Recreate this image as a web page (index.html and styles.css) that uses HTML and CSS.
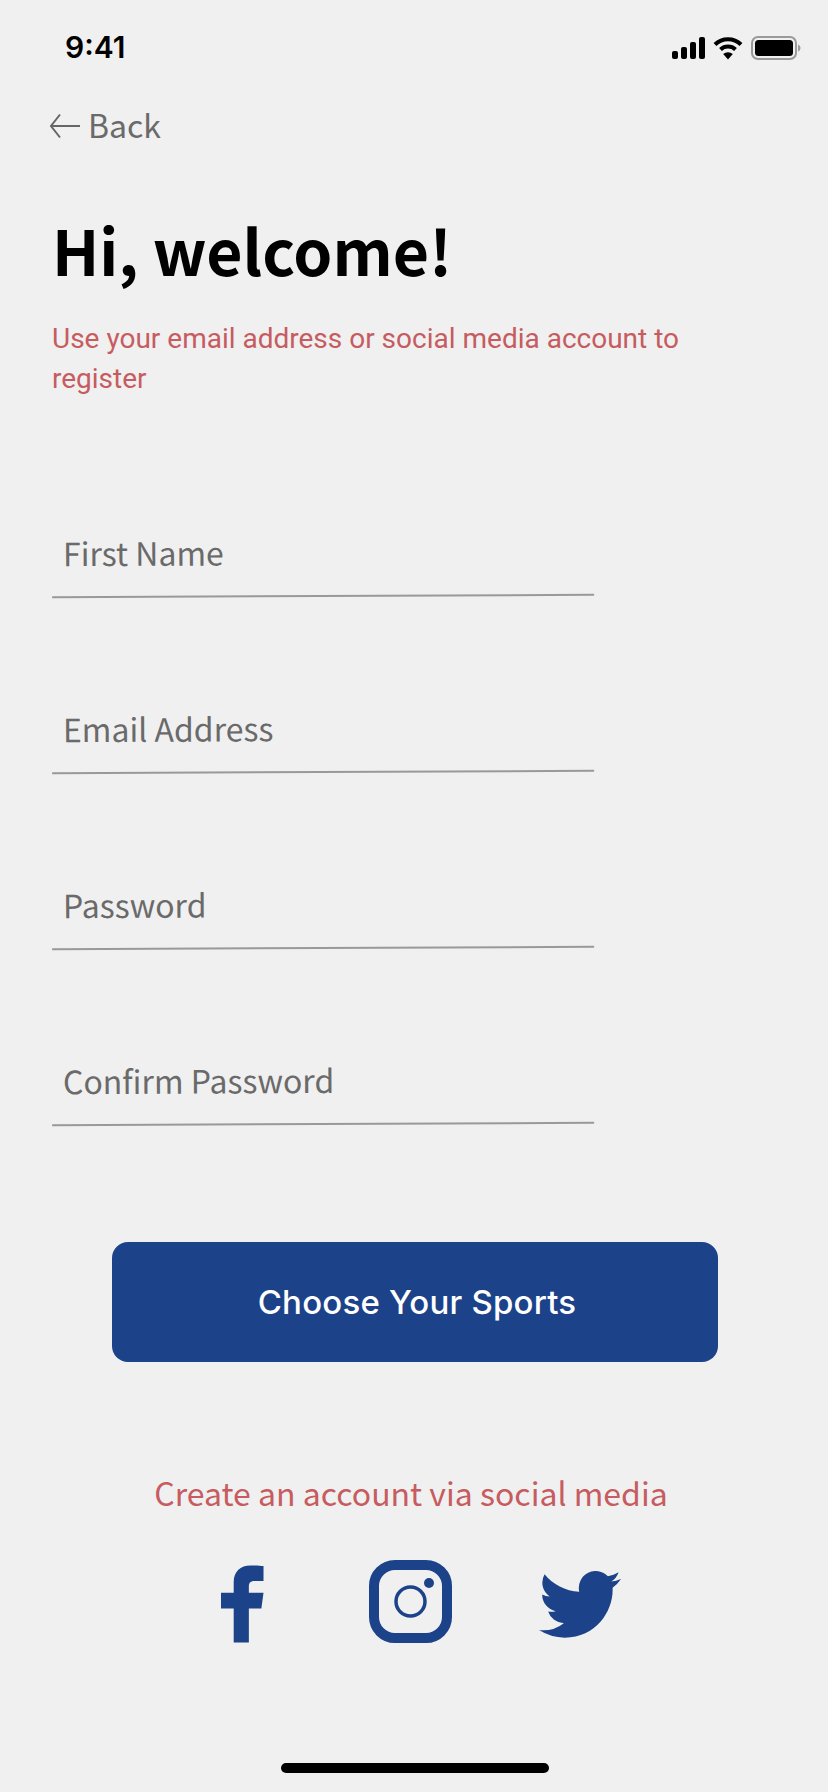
FILE: index.html
```html
<!DOCTYPE html>
<html lang="en">
<head>
  <meta charset="UTF-8">
  <title>Register</title>
  <link rel="stylesheet" href="styles.css">
</head>
<body>
  <div class="screen">
    <div class="status-bar">
      <span class="time">9:41</span>
      <div class="status-icons">
        <svg class="signal" width="34" height="22" viewBox="0 0 34 22" fill="#000">
          <rect x="0" y="14" width="6" height="8" rx="2"/>
          <rect x="9" y="10" width="6" height="12" rx="2"/>
          <rect x="18" y="5" width="6" height="17" rx="2"/>
          <rect x="27" y="0" width="6" height="22" rx="2"/>
        </svg>
        <svg class="wifi" width="30" height="24" viewBox="0 0 30 24" fill="none" stroke="#000" stroke-width="4">
          <path d="M2 8.500a18.500 18.500 0 0 1 26 0"/>
          <path d="M7.500 13.500a11 11 0 0 1 15 0"/>
          <path d="M15 23.500l-4.800-5.400a7 7 0 0 1 9.600 0z" fill="#000" stroke="none"/>
        </svg>
        <svg class="battery" width="50" height="24" viewBox="0 0 50 24">
          <rect x="1" y="1" width="44" height="22" rx="6" fill="none" stroke="#9a9a9a" stroke-width="2"/>
          <rect x="4" y="4" width="38" height="16" rx="3.500" fill="#000"/>
          <path d="M47 8.500c1.500.5 2.500 2 2.500 3.500s-1 3-2.500 3.500z" fill="#9a9a9a"/>
        </svg>
      </div>
    </div>

    <a class="back" href="#">
      <svg class="back-arrow" width="32" height="26" viewBox="0 0 32 26" fill="none" stroke="#666" stroke-width="2">
        <path d="M31 13H2M11 1.500L2 13l9 11.500"/>
      </svg>
      <span>Back</span>
    </a>

    <h1 class="title">Hi, welcome!</h1>
    <p class="intro">Use your email address or social media account to register</p>

    <form class="fields">
      <div class="field"><span>First Name</span></div>
      <div class="field"><span>Email Address</span></div>
      <div class="field"><span>Password</span></div>
      <div class="field"><span>Confirm Password</span></div>
    </form>

    <button class="main-btn" type="button">Choose Your Sports</button>

    <p class="social-title">Create an account via social media</p>
    <div class="social-icons">
      <svg class="fb" width="43" height="79" viewBox="0 0 44 80" fill="#1c428a">
        <path d="M13 79V44H0V28h13V17C13 6 20 0 30 0c6 0 11 .3 13.500.6V16h-9c-5 0-6 2.400-6 6v6h15l-2.200 16H28.500v35z"/>
      </svg>
      <svg class="ig" width="84" height="84" viewBox="0 0 84 84" fill="none" stroke="#1c428a">
        <rect x="5" y="5" width="73" height="73" rx="21" stroke-width="10"/>
        <circle cx="41.500" cy="41.500" r="14.500" stroke-width="3.500"/>
        <circle cx="60" cy="23" r="5" fill="#1c428a" stroke="none"/>
      </svg>
      <svg class="tw" width="82" height="67" viewBox="0 2.300 24 19.500" fill="#1c428a">
        <path d="M23.953 4.570a10 10 0 0 1-2.825.775 4.958 4.958 0 0 0 2.163-2.723c-.951.555-2.005.959-3.127 1.184a4.920 4.920 0 0 0-8.384 4.482C7.690 8.095 4.067 6.130 1.640 3.162a4.822 4.822 0 0 0-.666 2.475c0 1.710.870 3.213 2.188 4.096a4.904 4.904 0 0 1-2.228-.616v.060a4.923 4.923 0 0 0 3.946 4.827 4.996 4.996 0 0 1-2.212.085 4.936 4.936 0 0 0 4.604 3.417 9.867 9.867 0 0 1-6.102 2.105c-.390 0-.779-.023-1.170-.067a13.995 13.995 0 0 0 7.557 2.209c9.053 0 13.998-7.496 13.998-13.985 0-.210 0-.420-.015-.630A9.935 9.935 0 0 0 24 4.590z"/>
      </svg>
    </div>

    <div class="home-bar"></div>
  </div>
</body>
</html>
```

FILE: styles.css
```css
* {
  box-sizing: border-box;
}
body {
  margin: 0;
  background: #f0f0f0;
  font-family: "Noto Sans CJK JP", "Noto Sans", sans-serif;
}
.screen {
  width: 828px;
  height: 1792px;
  display: flex;
  flex-direction: column;
  overflow: hidden;
}
.status-bar {
  height: 99px;
  padding: 29px 27px 0 65px;
  display: flex;
  justify-content: space-between;
  align-items: flex-start;
}
.time {
  font-family: Inter, sans-serif;
  font-size: 30px;
  font-weight: 600;
  line-height: 36px;
  color: #000;
}
.status-icons {
  display: flex;
  align-items: center;
  gap: 7px;
  margin-top: 7px;
}
.battery {
  margin-left: 1px;
}
.back {
  display: flex;
  align-items: center;
  gap: 7px;
  height: 50px;
  margin-left: 49px;
  color: #6a6a6a;
  text-decoration: none;
  font-size: 32px;
}
.back-arrow {
  margin-top: 3px;
}
.title {
  margin: 55px 0 0 52px;
  font-size: 62.500px;
  font-weight: 700;
  line-height: 90px;
  color: #000;
}
.intro {
  margin: 25px 0 0 52px;
  width: 690px;
  font-family: Roboto, sans-serif;
  font-size: 28px;
  line-height: 40px;
  color: #c65c60;
}
.fields {
  margin: 132px 0 0 52px;
  width: 542px;
  display: flex;
  flex-direction: column;
  gap: 110px;
}
.field {
  height: 66px;
  padding-left: 11px;
  border-bottom: 2px solid #999;
  transform: rotate(-0.25deg);
  font-size: 32px;
  line-height: 40px;
  color: #6a6a6a;
}
.main-btn {
  margin: 117px 0 0 112px;
  width: 606px;
  height: 120px;
  padding: 0 0 0 4px;
  background: #1c428a;
  border: none;
  border-radius: 16px;
  color: #fff;
  font-family: Inter, sans-serif;
  font-size: 33px;
  font-weight: 500;
  letter-spacing: 0.2px;
}
.social-title {
  margin: 108px 0 0;
  width: 822px;
  text-align: center;
  font-size: 32px;
  line-height: 44px;
  color: #c65c60;
}
.social-icons {
  margin: 51px 0 0 221px;
  display: flex;
  align-items: flex-start;
}
.ig {
  margin: -5px 0 0 105px;
}
.tw {
  margin: 6px 0 0 86px;
}
.home-bar {
  position: absolute;
  top: 1763px;
  left: 281px;
  width: 268px;
  height: 10px;
  background: #000;
  border-radius: 5px;
}
```
